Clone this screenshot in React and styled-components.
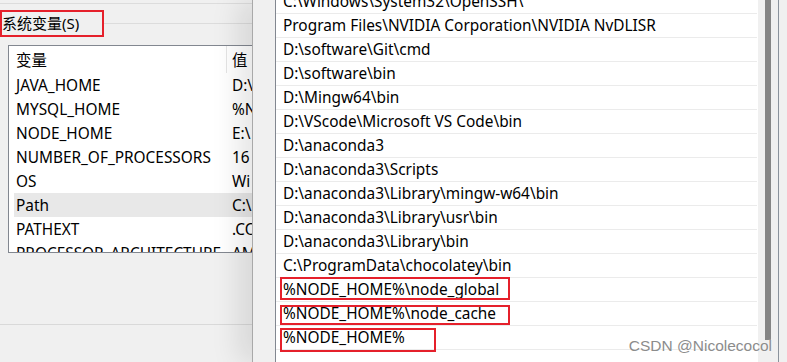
import React from 'react';
import styled, { createGlobalStyle } from 'styled-components';

const GlobalStyle = createGlobalStyle`
    html, body {
        margin: 0;
        padding: 0;
        overflow: hidden;
        background: #f0f0f0;
    }
`

const UI_FONT = `"Noto Sans", "Noto Sans CJK SC", sans-serif`;

const Screen = styled.div`
    position: relative;
    width: 787px;
    height: 362px;
    display: flex;
    overflow: hidden;
    font-family: ${UI_FONT};
    font-size: 15.4px;
    color: #000;
`

// ---------- left window (系统变量) ----------
const LeftWindow = styled.div`
    width: 252px;
    flex-shrink: 0;
    display: flex;
    flex-direction: column;
    background: #f0f0f0;
`
const TopEdge = styled.div`
    height: 3px;
    border-bottom: 1px solid #dcdcdc;
`
const GroupHeader = styled.div`
    display: flex;
    align-items: center;
    margin-top: 6px;
`
const Marked = styled.div`
    box-sizing: border-box;
    width: 104px;
    height: 27px;
    border: 2px solid #e5202b;
    display: flex;
    align-items: center;
    font-size: 15px;
    white-space: nowrap;
    line-height: 1;
`
const GroupLine = styled.div`
    flex: 1;
    height: 1px;
    background: #dcdcdc;
`
const VarList = styled.div`
    box-sizing: border-box;
    margin: 8px 0 0 8px;
    height: 208px;
    background: #fff;
    border: 1px solid #828790;
    border-right: none;
    overflow: hidden;
`
const VarRow = styled.div`
    display: grid;
    grid-template-columns: ${p => (p.$selected ? '213px' : '218px')} 1fr;
    height: ${p => (p.$head ? '27px' : '24px')};
    align-items: center;
    background: ${p => (p.$selected ? '#e8e8e8' : 'transparent')};
    margin-left: ${p => (p.$selected ? '5px' : '0')};
    white-space: nowrap;
    overflow: hidden;
`
const VarName = styled.span`
    padding-left: ${p => (p.$selected ? '2px' : '7px')};
    height: 100%;
    display: flex;
    align-items: center;
    border-right: ${p => (p.$head ? '1px solid #e5e5e5' : '1px solid transparent')};
    box-sizing: border-box;
`
const VarValue = styled.span`
    padding-left: 5px;
`
const LeftFiller = styled.div`
    flex: 1;
    border-bottom: 1px solid #d9d9d9;
    min-height: 0;
`
const LeftBottom = styled.div`
    height: 37px;
`

// ---------- right dialog (编辑环境变量) ----------
const RightDialog = styled.div`
    position: relative;
    z-index: 1;
    flex: 1;
    display: flex;
    background: #f0f0f0;
    border-left: 1px solid #a9a9a9;
    box-shadow: -14px 0 26px rgba(0, 0, 0, 0.10);
    padding-left: 22px;
    padding-right: 8px;
`
const PathBox = styled.div`
    flex: 1;
    display: flex;
    border-left: 1px solid #828790;
    border-right: 1px solid #8a929c;
    overflow: hidden;
`
const PathList = styled.div`
    flex: 1;
    background: #fff;
    margin-top: -10px;
`
const PathRow = styled.div`
    position: relative;
    box-sizing: border-box;
    height: 24px;
    padding-left: 7px;
    display: flex;
    align-items: center;
    border-bottom: 1px solid #ebebeb;
    margin-right: 1px;
    white-space: nowrap;
`
const RedBox = styled.span`
    position: absolute;
    left: 4px;
    top: ${p => p.$top}px;
    width: ${p => p.$w}px;
    height: ${p => p.$h}px;
    box-sizing: border-box;
    border: 2px solid #e5202b;
    pointer-events: none;
`
const ScrollTrack = styled.div`
    width: 20px;
    background: #f0f0f0;
    padding-left: 7px;
    box-sizing: border-box;
`
const ScrollThumb = styled.div`
    width: 6px;
    height: 340px;
    background: #858585;
`

const Watermark = styled.div`
    position: absolute;
    right: 15px;
    bottom: 7px;
    z-index: 2;
    font-family: "Liberation Sans", Arial, sans-serif;
    font-size: 15.5px;
    color: #8c8c8c;
    text-shadow: 0 0 2px rgba(255, 255, 255, 0.9);
`

const vars = [
    ['JAVA_HOME', 'D:\\'],
    ['MYSQL_HOME', '%N'],
    ['NODE_HOME', 'E:\\'],
    ['NUMBER_OF_PROCESSORS', '16'],
    ['OS', 'Wi'],
    ['Path', 'C:\\', true],
    ['PATHEXT', '.CO'],
    ['PROCESSOR_ARCHITECTURE', 'AM'],
];

const paths = [
    { text: 'C:\\Windows\\System32\\OpenSSH\\' },
    { text: 'Program Files\\NVIDIA Corporation\\NVIDIA NvDLISR' },
    { text: 'D:\\software\\Git\\cmd' },
    { text: 'D:\\software\\bin' },
    { text: 'D:\\Mingw64\\bin' },
    { text: 'D:\\VScode\\Microsoft VS Code\\bin' },
    { text: 'D:\\anaconda3' },
    { text: 'D:\\anaconda3\\Scripts' },
    { text: 'D:\\anaconda3\\Library\\mingw-w64\\bin' },
    { text: 'D:\\anaconda3\\Library\\usr\\bin' },
    { text: 'D:\\anaconda3\\Library\\bin' },
    { text: 'C:\\ProgramData\\chocolatey\\bin' },
    { text: '%NODE_HOME%\\node_global', box: { top: -1, w: 230, h: 23 } },
    { text: '%NODE_HOME%\\node_cache', box: { top: 3, w: 230, h: 20 } },
    { text: '%NODE_HOME%', box: { top: 2, w: 156, h: 24 } },
    { text: '' },
    { text: '' },
];

const App = () => {
    return (
        <>
            <GlobalStyle />
            <Screen>
                <LeftWindow>
                    <TopEdge />
                    <GroupHeader>
                        <Marked>系统变量(S)</Marked>
                        <GroupLine />
                    </GroupHeader>
                    <VarList>
                        <VarRow $head>
                            <VarName $head>变量</VarName>
                            <VarValue>值</VarValue>
                        </VarRow>
                        {vars.map(([name, value, selected]) => (
                            <VarRow key={name} $selected={selected}>
                                <VarName $selected={selected}>{name}</VarName>
                                <VarValue>{value}</VarValue>
                            </VarRow>
                        ))}
                    </VarList>
                    <LeftFiller />
                    <LeftBottom />
                </LeftWindow>

                <RightDialog>
                    <PathBox>
                        <PathList>
                            {paths.map((p, i) => (
                                <PathRow key={i}>
                                    {p.text}
                                    {p.box && <RedBox $top={p.box.top} $w={p.box.w} $h={p.box.h} />}
                                </PathRow>
                            ))}
                        </PathList>
                        <ScrollTrack>
                            <ScrollThumb />
                        </ScrollTrack>
                    </PathBox>
                </RightDialog>

                <Watermark>CSDN @Nicolecocol</Watermark>
            </Screen>
        </>
    )
}

export default App;
